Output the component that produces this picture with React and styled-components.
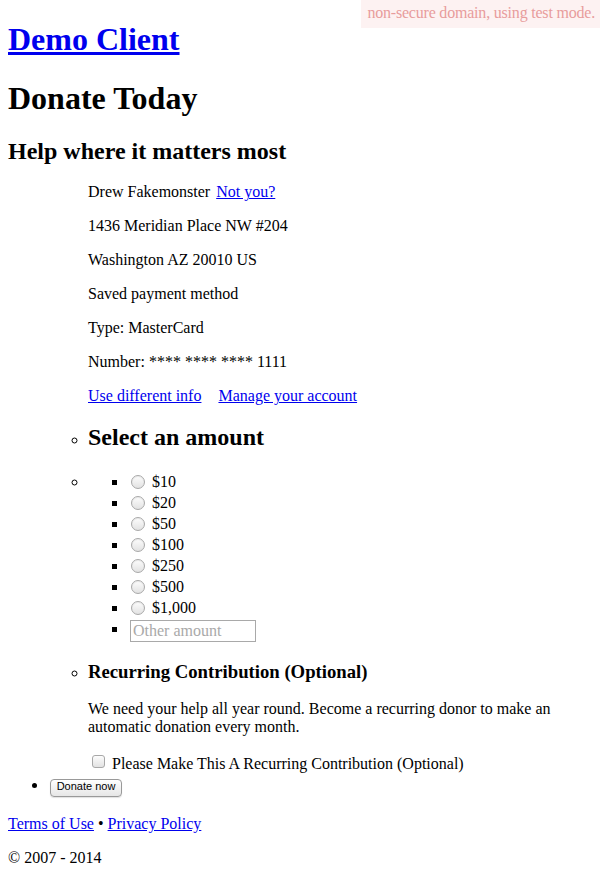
import React from 'react'
import styled, { createGlobalStyle } from 'styled-components'

const GlobalStyle = createGlobalStyle`
    body {
        margin: 0;
        padding: 0 8px;
        font-family: "Liberation Serif", "Times New Roman", serif;
        font-size: 16px;
        color: #000;
        background: #fff;
    }
`

const amounts = ['$10', '$20', '$50', '$100', '$250', '$500', '$1,000']

export default function App() {
    return (
        <>
            <GlobalStyle />
            <Banner>non-secure domain, using test mode.</Banner>

            <SiteTitle><Link href="#">Demo Client</Link></SiteTitle>
            <PageTitle>Donate Today</PageTitle>
            <Subtitle>Help where it matters most</Subtitle>

            <OuterList>
                <Item $bare>
                    <InnerList>
                        <Item $bare>
                            <Para>Drew Fakemonster <Link href="#" $gap={2}>Not you?</Link></Para>
                            <Para>1436 Meridian Place NW #204</Para>
                            <Para>Washington AZ 20010 US</Para>
                            <Para>Saved payment method</Para>
                            <Para>Type: MasterCard</Para>
                            <Para>Number: **** **** **** 1111</Para>
                            <Para>
                                <Link href="#">Use different info</Link>
                                <Link href="#" $gap={17}>Manage your account</Link>
                            </Para>
                        </Item>
                        <Item>
                            <SectionTitle>Select an amount</SectionTitle>
                        </Item>
                        <Item>
                            <AmountList>
                                {amounts.map(a => (
                                    <AmountRow key={a}>
                                        <Radio type="radio" name="amount" /> {a}
                                    </AmountRow>
                                ))}
                                <AmountRow $tall>
                                    <OtherAmount type="text" placeholder="Other amount" />
                                </AmountRow>
                            </AmountList>
                        </Item>
                        <Item>
                            <SmallTitle>Recurring Contribution (Optional)</SmallTitle>
                            <Para>We need your help all year round. Become a recurring donor to make an automatic donation every month.</Para>
                            <CheckRow>
                                <Check type="checkbox" /> Please Make This A Recurring Contribution (Optional)
                            </CheckRow>
                        </Item>
                    </InnerList>
                </Item>
                <ButtonItem>
                    <DonateButton>Donate now</DonateButton>
                </ButtonItem>
            </OuterList>

            <Para>
                <Link href="#">Terms of Use</Link> • <Link href="#">Privacy Policy</Link>
            </Para>
            <Para>© 2007 - 2014</Para>
        </>
    )
}

const Banner = styled.div`
    position: absolute;
    top: 0;
    right: 0;
    padding: 4px 5px 6px 6px;
    background: #fdf2f2;
    color: #e89c9c;
    font-size: 16px;
    line-height: 18px;
    letter-spacing: -0.2px;
`

const Link = styled.a`
    color: #0000ee;
    text-decoration: underline;
    margin-left: ${props => props.$gap || 0}px;
`

const SiteTitle = styled.h1`
    font-size: 32px;
    font-weight: bold;
    margin: 21.44px 0;
`

const PageTitle = styled.h1`
    font-size: 32px;
    font-weight: bold;
    margin: 21.44px 0;
`

const Subtitle = styled.h2`
    font-size: 24px;
    font-weight: bold;
    margin: 19.92px 0 18px;
`

const OuterList = styled.ul`
    margin: 18px 0;
    padding-left: 40px;
    list-style-type: disc;
`

const InnerList = styled.ul`
    margin: 0;
    padding-left: 40px;
    list-style-type: circle;
`

const Item = styled.li`
    list-style-type: ${props => props.$bare ? 'none' : 'inherit'};
`

const ButtonItem = styled.li`
    line-height: 12px;
    height: 18px;
`

const Para = styled.p`
    margin: 16px 0;
    line-height: 18px;
`

const SectionTitle = styled.h2`
    font-size: 24px;
    font-weight: bold;
    margin: 19px 0 19.92px;
`

const SmallTitle = styled.h3`
    font-size: 18.72px;
    font-weight: bold;
    margin: 19.72px 0 17px;
`

const AmountList = styled.ul`
    margin: 0;
    padding-left: 40px;
    list-style-type: square;
`

const AmountRow = styled.li`
    line-height: ${props => props.$tall ? 22 : 21}px;
`

const Radio = styled.input`
    appearance: none;
    box-sizing: border-box;
    margin: 3px 3px 0 3px;
    width: 14px;
    height: 14px;
    border: 1px solid #a8a8a8;
    border-radius: 50%;
    background: linear-gradient(#fdfdfd, #e2e2e2);
    box-shadow: inset 0 1px 1px rgba(0, 0, 0, 0.08);
    vertical-align: -2px;
`

const OtherAmount = styled.input`
    box-sizing: border-box;
    width: 126px;
    height: 22px;
    margin: 0 0 0 2px;
    padding: 1px 2px;
    border: 1px solid #a9a9a9;
    font-family: "Liberation Serif", "Times New Roman", serif;
    font-size: 16px;
    vertical-align: middle;

    &::placeholder {
        color: #a9a9a9;
    }
`

const CheckRow = styled.div`
    margin: 13px 0 0;
    padding-bottom: 6px;
    line-height: 18px;
`

const Check = styled.input`
    appearance: none;
    box-sizing: border-box;
    margin: 3px 3px 3px 4px;
    width: 13px;
    height: 13px;
    border: 1px solid #a8a8a8;
    border-radius: 3px;
    background: linear-gradient(#fdfdfd, #e2e2e2);
    vertical-align: -2px;
`

const DonateButton = styled.button`
    box-sizing: border-box;
    width: 72px;
    height: 18px;
    margin: 0 0 0 2px;
    padding: 0 0 4px;
    font-family: "Liberation Sans", Arial, sans-serif;
    font-size: 11px;
    line-height: 12px;
    color: #000;
    background: linear-gradient(#ffffff, #e6e6e6);
    border: 1px solid #999;
    border-radius: 4px;
    box-shadow: 0 1px 1px rgba(0, 0, 0, 0.12);
    vertical-align: top;
`
